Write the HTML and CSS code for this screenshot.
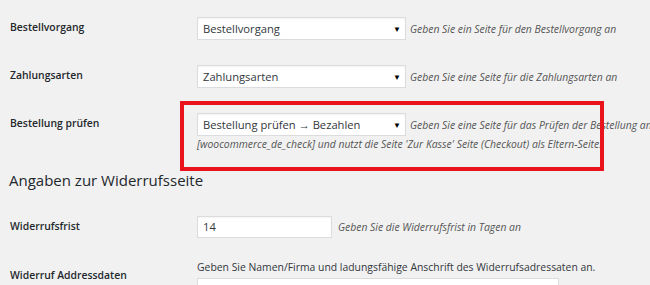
FILE: index.html
```html
<!DOCTYPE html>
<html lang="de">
<head>
<meta charset="utf-8">
<link rel="stylesheet" href="styles.css">
</head>
<body>
<div class="page">
  <div class="row r1">
    <div class="label">Bestellvorgang</div>
    <div class="field"><span class="select">Bestellvorgang<span class="arrow">▼</span></span><span class="desc">Geben Sie ein Seite für den Bestellvorgang an</span></div>
  </div>
  <div class="row r2">
    <div class="label">Zahlungsarten</div>
    <div class="field"><span class="select">Zahlungsarten<span class="arrow">▼</span></span><span class="desc">Geben Sie eine Seite für die Zahlungsarten an</span></div>
  </div>
  <div class="row r3">
    <div class="label">Bestellung prüfen</div>
    <div class="field"><span class="select">Bestellung prüfen → Bezahlen<span class="arrow">▼</span></span><span class="desc">Geben Sie eine Seite für das Prüfen der Bestellung an [woocommerce_de_check] und nutzt die Seite 'Zur Kasse' Seite (Checkout) als Eltern-Seite.</span></div>
  </div>
  <h2 class="heading">Angaben zur Widerrufsseite</h2>
  <div class="row r4">
    <div class="label">Widerrufsfrist</div>
    <div class="field"><span class="input">14</span><span class="desc">Geben Sie die Widerrufsfrist in Tagen an</span></div>
  </div>
  <div class="row r5">
    <div class="label">Widerruf Addressdaten</div>
    <div class="field">
      <div class="plain">Geben Sie Namen/Firma und ladungsfähige Anschrift des Widerrufsadressaten an.</div>
      <div class="textarea"></div>
    </div>
  </div>
  <div class="highlight"></div>
</div>
</body>
</html>
```
FILE: styles.css
```css
html, body {
  margin: 0;
  padding: 0;
  background: #f1f1f1;
}
body {
  font-family: "Open Sans", "Noto Sans", sans-serif;
  color: #23282d;
  overflow: hidden;
}
.page {
  position: relative;
  width: 650px;
  height: 285px;
  padding-top: 17px;
  box-sizing: border-box;
  overflow: hidden;
}
.row {
  display: grid;
  grid-template-columns: 187px 1fr;
  padding-left: 10px;
}
.label {
  font-size: 10.4px;
  font-weight: 600;
  line-height: 21px;
  white-space: nowrap;
}
.field {
  font-size: 10.4px;
  line-height: 14px;
  white-space: normal;
}
.r1, .r2 { height: 48px; }
.select {
  display: inline-flex;
  align-items: center;
  justify-content: space-between;
  box-sizing: border-box;
  width: 209px;
  height: 23px;
  padding: 0 4px 0 5px;
  background: #fff;
  border: 1px solid #dcdcdc;
  box-shadow: inset 0 1px 2px rgba(0,0,0,0.05);
  font-size: 11.2px;
  color: #32373c;
  vertical-align: middle;
  margin-right: 4px;
}
.arrow {
  font-size: 8px;
  color: #000;
}
.desc {
  font-style: italic;
  color: #555;
  vertical-align: middle;
}
.r3 .field { width: 475px; }
.heading {
  margin: 19px 0 0 9px;
  font-size: 15px;
  font-weight: 400;
  color: #23282d;
  line-height: 20px;
  height: 46px;
}
.input {
  display: inline-flex;
  align-items: center;
  box-sizing: border-box;
  width: 135px;
  height: 22px;
  padding: 0 5px;
  background: #fff;
  border: 1px solid #dcdcdc;
  box-shadow: inset 0 1px 2px rgba(0,0,0,0.05);
  font-size: 11.2px;
  color: #32373c;
  vertical-align: middle;
  margin-right: 6px;
}
.r4 { height: 44px; }
.r5 .label { padding-top: 5px; }
.plain {
  color: #32373c;
  line-height: 14px;
}
.textarea {
  margin-top: 4px;
  width: 362px;
  height: 30px;
  background: #fff;
  border: 1px solid #dcdcdc;
  box-sizing: border-box;
}
.highlight {
  position: absolute;
  left: 180px;
  top: 101px;
  width: 424px;
  height: 70px;
  box-sizing: border-box;
  border: 4px solid #e8131b;
}
```
